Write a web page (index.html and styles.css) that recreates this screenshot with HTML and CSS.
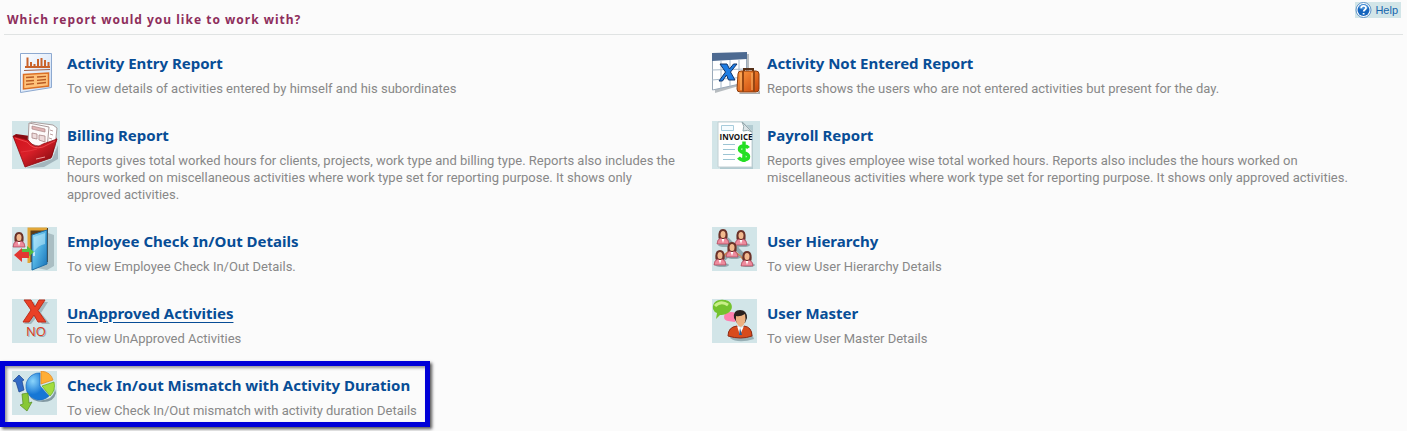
FILE: index.html
```html
<!DOCTYPE html>
<html lang="en">
<head>
<meta charset="utf-8">
<title>Reports</title>
<link rel="stylesheet" href="styles.css">
</head>
<body>
<header class="bar">
  <h1 class="heading">Which report would you like to work with?</h1>
  <a class="help" href="#help">
    <svg class="help-icon" viewBox="0 0 16 16" aria-hidden="true"><circle cx="8" cy="8" r="7.5" fill="#fff" stroke="#5e93c8"/><circle cx="8" cy="8" r="6" fill="#1765bd"/><path d="M3 6a5 4 0 0 1 10 0q-5 3-10 0" fill="#65a9e5" opacity=".6"/><path d="M5.7 6.2c0-3.2 4.8-3 4.8-.3 0 1.8-2.3 1.8-2.3 3.6M8.1 11v1.5" fill="none" stroke="#fff" stroke-width="1.8"/></svg>
    <span>Help</span>
  </a>
</header>
<main class="reports">
  <section class="report">
    <svg class="icon" viewBox="0 0 48 48" aria-hidden="true">
      <defs><linearGradient id="paper" x2="1" y2="1"><stop stop-color="#fff"/><stop offset="1" stop-color="#c9dcf6"/></linearGradient></defs>
      <path d="M8.500 4.500h31v34l-31 5z" fill="url(#paper)" stroke="#8da9d0"/>
      <path d="M13 18h25M15.500 18V8.500M19 18v-5M22.500 18v-3M26 18v-8M29.500 18V9M33 18v-7M36.500 18v-5" stroke="#c9622a" stroke-width="2" fill="none"/>
      <path d="M12 21.500l26-1" stroke="#a06048"/><path d="M11.500 25.500l25-1.500v13l-25 3z" fill="#ffc27a" stroke="#dc7026" stroke-width="1.500"/>
      <path d="M14 28.500l8-.5M14 32l8-.5M14 35.500l8-.8M25 28l9-.7M25 31.300l9-.8M25 34.500l9-1" stroke="#b95b24" stroke-width="1.300"/>
    </svg>
    <div class="text"><h2 class="title"><a href="#activity-entry">Activity Entry Report</a></h2>
    <p class="desc">To view details of activities entered by himself and his subordinates</p></div>
  </section>
  <section class="report">
    <svg class="icon" viewBox="0 0 48 48" aria-hidden="true">
      <defs><linearGradient id="bag" x2="1" y2="1"><stop stop-color="#ff9b42"/><stop offset="1" stop-color="#c84508"/></linearGradient></defs>
      <path d="M2 6l35-1v29L3 44z" fill="#8b929a" opacity=".6"/>
      <path d="M.5 4.500h34v29L.5 41z" fill="#fff" stroke="#9aa9b9"/><path d="M0 4l35-1v7L0 12z" fill="#4d6a91"/>
      <path d="M0 21l34-1M0 31l34-3M9 12v27M18 11v26M27 11v24" stroke="#a8b9c9"/>
      <path d="M8 15h7l2.500 5 4-5H25l-6.500 8 4.500 8h-6.500l-2-5-4 6H7l6.500-9z" fill="#1d7de4" stroke="#123469"/>
      <path d="M27 44h18l3-3v4H28z" fill="#777" opacity=".6"/>
      <path d="M32 24v-4h9v4" fill="none" stroke="#553018" stroke-width="2"/>
      <path d="M26 25q0-3 3-3h15q3 0 3 3v15q0 3-3 3H28q-3 0-3-3z" fill="url(#bag)" stroke="#8a3b0b"/>
      <path d="M31 22v21M42 22v21" stroke="#974713" stroke-width="2"/><path d="M29 24v17M40 24v17" stroke="#ffc073"/>
    </svg>
    <div class="text"><h2 class="title"><a href="#not-entered">Activity Not Entered Report</a></h2>
    <p class="desc">Reports shows the users who are not entered activities but present for the day.</p></div>
  </section>
  <section class="report">
    <svg class="icon tile" viewBox="0 0 48 48" aria-hidden="true">
      <defs><linearGradient id="folder" x2="1" y2="1"><stop stop-color="#d3121c"/><stop offset=".45" stop-color="#d81f28"/><stop offset="1" stop-color="#6f070b"/></linearGradient></defs>
      <path d="M14 47l26-9 6-14v14l-14 8z" fill="#8ea3ab" opacity=".7"/>
      <path d="M1 15l3-2 14 2 25-1 2 4-5 18-26 8z" fill="#870b12"/>
      <path d="M19 1l22 3 4 3-2 19-10 2-16-5z" fill="#fff" stroke="#aaa0a0"/><path d="M17 2l20 4-2 22-19-6z" fill="#fdfafa" stroke="#a99999"/>
      <path d="M20 5l13 3v3l-13-3z" fill="#e0b4b4" stroke="#a98787" stroke-width=".7"/><path d="M20 12l5 1v5l-5-1zM27 14l6 1v6l-6-2zM38 9l3 1M38 13l3 1M37 17l3 1" fill="#eedcdc" stroke="#a98787" stroke-width=".8"/>
      <path d="M1 15l15 4q4 5 7 6 4 1 8-2l14-5-6 19-26 9z" fill="url(#folder)" stroke="#8d0b12" stroke-width=".8"/>
      <path d="M3 17l12 4q6 8 16 5l12-6" fill="none" stroke="#f66" opacity=".6"/><path d="M9 31q10-1 16-3" fill="none" stroke="#f04a50" opacity=".5"/><path d="M24 38l9-2" stroke="#ed9b9b"/>
    </svg>
    <div class="text"><h2 class="title"><a href="#billing">Billing Report</a></h2>
    <p class="desc">Reports gives total worked hours for clients, projects, work type and billing type. Reports also includes the hours worked on miscellaneous activities where work type set for reporting purpose. It shows only approved activities.</p></div>
  </section>
  <section class="report">
    <svg class="icon tile" viewBox="0 0 48 48" aria-hidden="true">
      <path d="M8 4h33v44H8z" fill="#9db9c1" opacity=".6"/><path d="M6 1h25l9 9v36H6z" fill="#fff" stroke="#c2d0d4"/>
      <path d="M30 1q3 4 1 9 5-2 9 1z" fill="#dce5e8" stroke="#95aaaf"/><path d="M9.500 4.500h12v5h-12z" fill="#f5fcff" stroke="#a7ccdc"/>
      <text class="invoice" x="24" y="19" text-anchor="middle">INVOICE</text>
      <path d="M11 23.500h12M11 28.500h12M11 33.500h12M11 38.500h12" stroke="#9cc4d3"/>
      <path d="M36.500 27c-2-3-9-2.500-9 1.300 0 4.500 9 2.500 9 7.200 0 4-7.500 4.500-10 1M32 20.500v20.500" fill="none" stroke="#25df25" stroke-width="3.500"/>
    </svg>
    <div class="text"><h2 class="title"><a href="#payroll">Payroll Report</a></h2>
    <p class="desc">Reports gives employee wise total worked hours. Reports also includes the hours worked on miscellaneous activities where work type set for reporting purpose. It shows only approved activities.</p></div>
  </section>
  <section class="report">
    <svg class="icon small tile" viewBox="0 0 45 44" aria-hidden="true">
      <defs><linearGradient id="door" x2="1" y2="1"><stop stop-color="#9de0fa"/><stop offset=".5" stop-color="#4daee0"/><stop offset="1" stop-color="#1670b6"/></linearGradient>
      <g id="person"><path d="M-4.500 2q-1-9 4.500-9t4.500 9l-1 2h-7z" fill="#6b3229"/><ellipse cy="-1.500" rx="2.500" ry="3.500" fill="#f2b98e"/><path d="M-6 8q0-5 4-6l2 2 2-2q4 1 4 6z" fill="#ee8b9d" stroke="#a74358" stroke-width=".7"/><path d="M-1.300 3L0 7l1.300-4z" fill="#fff"/></g></defs>
      <path d="M20 40l15 3 7-4V8l-6-2z" fill="#81989e" opacity=".5"/><path d="M17 1h19v34H17z" fill="#5d3d18"/><path d="M17 36V2h18" fill="none" stroke="#e2a638" stroke-width="3"/>
      <path d="M20 8l15-5v34l-15 6z" fill="url(#door)" stroke="#1c6da7"/><path d="M22 10l11-4v11q-7 1-11 8z" fill="#c9f1fd" opacity=".5"/><path d="M22 25v4" stroke="#e7f6ff" stroke-width="1.500"/>
      <use href="#person" x="7" y="12"/>
      <path d="M9 22h6v-3l7 6-7 6v-3H9z" fill="#54bd42"/><path d="M17 25h-7v-4l-8 7 8 7v-4h7z" fill="#e23731"/>
    </svg>
    <div class="text"><h2 class="title"><a href="#employee-check">Employee Check In/Out Details</a></h2>
    <p class="desc">To view Employee Check In/Out Details.</p></div>
  </section>
  <section class="report">
    <svg class="icon small tile" viewBox="0 0 45 44" aria-hidden="true">
      <path d="M15 12l20 20M33 12L12 32" stroke="#8fa9af" stroke-width="4"/><path d="M11 15l23 19M31 13L10 30" stroke="#c88450" stroke-width="2"/>
      <g fill="#93aab0"><ellipse cx="13" cy="18" rx="7" ry="2"/><ellipse cx="31" cy="18" rx="7" ry="2"/><ellipse cx="22" cy="30" rx="7" ry="2"/><ellipse cx="10" cy="38" rx="7" ry="2"/><ellipse cx="36" cy="38" rx="7" ry="2"/></g>
      <use href="#person" x="11" y="9"/><use href="#person" x="29" y="10"/><use href="#person" x="20" y="22"/><use href="#person" x="8" y="30"/><use href="#person" x="35" y="31"/>
    </svg>
    <div class="text"><h2 class="title"><a href="#hierarchy">User Hierarchy</a></h2>
    <p class="desc">To view User Hierarchy Details</p></div>
  </section>
  <section class="report">
    <svg class="icon small tile" viewBox="0 0 45 44" aria-hidden="true">
      <path d="M14 3h8l4 7 4-7h6l-7 11 9 11h-8l-5-7-6 7h-7l9-12z" fill="#8da5ac" opacity=".7"/>
      <path d="M12 1h7l4 7 4-7h6l-7 10.500L34 23h-8l-4-7-5 7h-6l8-12z" fill="#e94126" stroke="#bd2d1a"/>
      <text class="no-shadow" x="25" y="38" text-anchor="middle">NO</text><text class="no" x="24" y="37" text-anchor="middle">NO</text>
    </svg>
    <div class="text"><h2 class="title"><a class="active" href="#unapproved">UnApproved Activities</a></h2>
    <p class="desc">To view UnApproved Activities</p></div>
  </section>
  <section class="report">
    <svg class="icon small tile" viewBox="0 0 45 44" aria-hidden="true">
      <path d="M18 39q8 6 24 1l-3-8-17-1z" fill="#7f999f" opacity=".7"/>
      <path d="M12 18q0-5 7-5 5 0 7 4l-3 6-7-1q-4-1-4-4z" fill="#ff7fae"/>
      <path d="M1 10C0 3 6 0 12 1c8 0 11 9 4 13-4 2-6 2-8 2l-4 4 1-6q-3-1-4-4z" fill="#74c22e"/><path d="M3 7q6-6 13-1" stroke="#c9ef88" stroke-width="3" fill="none"/>
      <path d="M22 19q-1-8 6-8t7 8l-2 5h-8z" fill="#2b211f"/><path d="M24 17q4 1 9-2 2 10-4 13-6-2-5-11z" fill="#edb181"/>
      <path d="M16 37q0-9 9-10l4 4 3-4q8 1 8 10-11 4-24 0z" fill="#d84b1c" stroke="#8e2a14"/><path d="M25 27l3 9 4-9-3 2z" fill="#fff"/><path d="M28 29l-1 7h3z" fill="#255f9a"/>
    </svg>
    <div class="text"><h2 class="title"><a href="#user-master">User Master</a></h2>
    <p class="desc">To view User Master Details</p></div>
  </section>
  <section class="report marked">
    <svg class="icon small tile" viewBox="0 0 45 44" aria-hidden="true">
      <defs><radialGradient id="pie" cx=".3" cy=".3"><stop stop-color="#8bd5fb"/><stop offset="1" stop-color="#1677d5"/></radialGradient></defs>
      <path d="M17 24q8 9 21 3 7-6 4-13l2 8q-2 9-13 9-11 0-14-7z" fill="#8299a2"/>
      <path d="M28 15V2a13.500 13.500 0 1 0 9 23z" fill="url(#pie)" stroke="#1a6bc0" stroke-width=".7"/><path d="M29 13V0q10 1 12 9z" fill="#ffae35" stroke="#e4831b" stroke-width=".7"/><path d="M30 15l12-4q2 8-4 14z" fill="#a3dc3e" stroke="#5eaa25" stroke-width=".7"/>
      <path d="M1 10l6-6 5 5-2 1 2 9-5 2-3-10z" fill="#3169c4" stroke="#1a428e" stroke-width=".7"/><path d="M10 23l6-1 1 10 3-1-5 9-7-6 3-1z" fill="#88c735" stroke="#548d21" stroke-width=".7"/>
    </svg>
    <div class="text"><h2 class="title"><a href="#mismatch">Check In/out Mismatch with Activity Duration</a></h2>
    <p class="desc">To view Check In/Out mismatch with activity duration Details</p></div>
  </section>
</main>
</body>
</html>
```

FILE: styles.css
```css
* { box-sizing: border-box; }
body {
  margin: 0;
  background: #fbfbfb;
  font-family: "Noto Sans", "Open Sans", sans-serif;
}
.bar {
  display: flex;
  justify-content: space-between;
  align-items: flex-start;
  height: 35px;
  margin: 0 4px;
  padding: 2px 2px 0 3px;
  border-bottom: 1px solid #e0e3e3;
}
.heading {
  margin: 8px 0 0;
  color: #8e2e5c;
  font-size: 12px;
  line-height: 20px;
  font-weight: 700;
  letter-spacing: 1px;
}
.help {
  display: flex;
  align-items: center;
  gap: 3px;
  height: 16px;
  padding-right: 3px;
  background: #d2e5e8;
  color: #1765ad;
  font: 11px/16px "Liberation Sans", sans-serif;
  text-decoration: none;
}
.help-icon { width: 17px; height: 16px; }
.reports {
  display: grid;
  grid-template-columns: 1fr 1fr;
  gap: 24px 32px;
  padding: 14px 27px 12px 12px;
}
.report {
  position: relative;
  display: flex;
  align-items: flex-start;
  gap: 7px;
}
.icon { width: 48px; height: 48px; flex: none; }
.small { width: 45px; height: 44px; margin-right: 3px; }
.tile { background: #d2e5e8; }
.text { padding-top: 4px; }
.title {
  margin: 0 0 7px;
  font-size: 15px;
  line-height: 20px;
  font-weight: 700;
}
.title a { color: #074d96; text-decoration: none; }
.title .active { text-decoration: underline; text-underline-offset: 3px; }
.desc {
  margin: 0;
  color: #888;
  font-family: Roboto, "Noto Sans", sans-serif;
  font-size: 13px;
  line-height: 17px;
}
.marked { justify-self: start; padding-right: 13px; }
.marked::after {
  content: "";
  position: absolute;
  inset: -10px 0 -8px -12px;
  border: 5px solid #0000d8;
  box-shadow: 2px 2px 3px #555, inset 2px 2px 3px #999;
  pointer-events: none;
}
.invoice { font: 700 8px "Open Sans", sans-serif; fill: #111; }
.no, .no-shadow { font: 400 13px "Open Sans", sans-serif; fill: #dc3b21; }
.no-shadow { fill: #9baeb2; }
```
